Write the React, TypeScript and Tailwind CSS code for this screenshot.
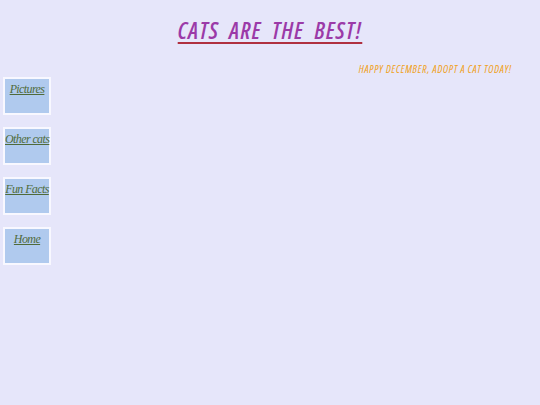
export default function App() {
  const links = ["Pictures", "Other cats", "Fun Facts", "Home"]
  return (
    <div className="min-h-[405px] w-[540px] bg-[#e6e6fa] relative">
      {/* Header */}
      <div className="pt-[15px] text-center">
        <h1 className="inline-block text-[23px] leading-[30px] italic font-semibold tracking-[1.2px] [font-stretch:75%] text-[#9b3aa8] underline decoration-[#b03040] decoration-2 underline-offset-[3px] [font-family:'Open_Sans',sans-serif]">
          CATS&nbsp; ARE&nbsp; THE&nbsp; BEST!
        </h1>
      </div>
      <p className="mt-[17px] pr-[28px] text-right text-[10.5px] italic tracking-[0.7px] [font-stretch:75%] text-[#f0a020] [font-family:'Open_Sans',sans-serif]">
        HAPPY DECEMBER, ADOPT A CAT TODAY!
      </p>

      {/* Nav */}
      <div className="mt-[-1px] ml-[3px] flex flex-col gap-[12px]">
        {links.map(l => (
          <div key={l} className="w-[48px] h-[38px] border-2 border-[#f8f8ff] bg-[#b0caee] text-center pt-[1px] leading-[14px]">
            <a className="text-[12px] italic text-[#4f6b3a] underline tracking-[-0.6px] whitespace-nowrap [font-family:'Liberation_Serif',serif]">
              {l}
            </a>
          </div>
        ))}
      </div>
    </div>
  )
}
